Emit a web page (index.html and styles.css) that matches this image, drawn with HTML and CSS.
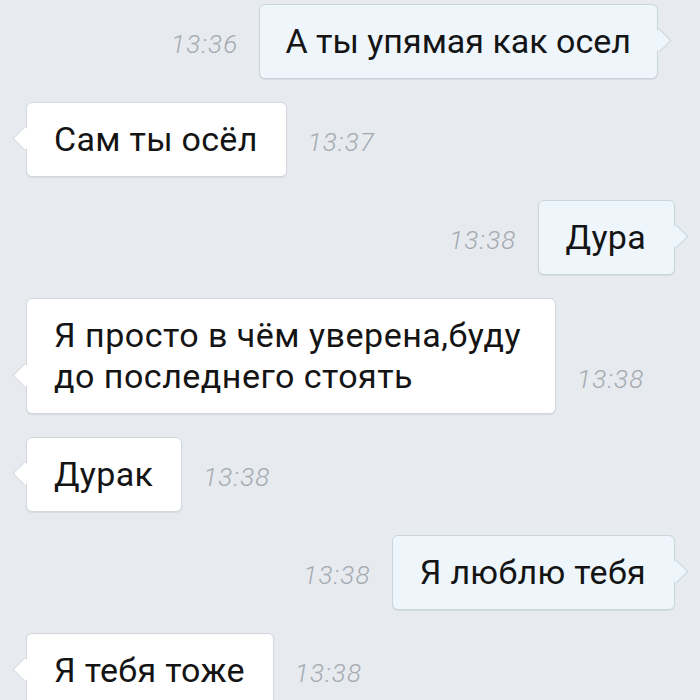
FILE: index.html
```html
<!DOCTYPE html>
<html lang="ru">
<head>
<meta charset="utf-8">
<link rel="stylesheet" href="styles.css">
</head>
<body>
<div class="chat">
  <div class="row out out-first">
    <span class="time">13:36</span>
    <div class="bubble tight">А ты упямая как осел</div>
  </div>
  <div class="row in">
    <div class="bubble">Сам ты осёл</div>
    <span class="time">13:37</span>
  </div>
  <div class="row out">
    <span class="time">13:38</span>
    <div class="bubble">Дура</div>
  </div>
  <div class="row in">
    <div class="bubble wide">Я просто в чём уверена,буду<br>до последнего стоять</div>
    <span class="time">13:38</span>
  </div>
  <div class="row in">
    <div class="bubble">Дурак</div>
    <span class="time">13:38</span>
  </div>
  <div class="row out">
    <span class="time">13:38</span>
    <div class="bubble">Я люблю тебя</div>
  </div>
  <div class="row in">
    <div class="bubble">Я тебя тоже</div>
    <span class="time">13:38</span>
  </div>
</div>
</body>
</html>
```

FILE: styles.css
```css
html, body {
  margin: 0;
  padding: 0;
  background: #e7eaee;
  width: 700px;
  height: 700px;
  overflow: hidden;
}

.chat {
  display: flex;
  flex-direction: column;
  gap: 23px;
  padding-top: 4px;
  font-family: Roboto, "Noto Sans", sans-serif;
}

.row {
  display: flex;
  align-items: flex-end;
  gap: 21px;
}

.row.out {
  justify-content: flex-end;
  padding-right: 25px;
}

.row.out.out-first {
  padding-right: 42px;
}

.row.in {
  padding-left: 26px;
}

.bubble {
  position: relative;
  font-size: 34px;
  letter-spacing: 0.3px;
  line-height: 41px;
  color: #141414;
  padding: 16px 28px 16px 27px;
  border-radius: 6px;
  background: #ffffff;
  border: 1px solid #d3d7dc;
  box-shadow: 0 1px 1px rgba(0, 0, 0, 0.07);
}

.bubble.tight {
  letter-spacing: 0;
  padding-left: 25px;
  padding-right: 26px;
}

.bubble.wide {
  letter-spacing: 0.5px;
  padding-right: 34px;
}

.bubble::after {
  content: "";
  position: absolute;
  bottom: 29px;
  width: 16px;
  height: 16px;
  background: inherit;
  transform: rotate(45deg);
}

.row.in .bubble::after {
  left: -11px;
  border-left: 1px solid #d3d7dc;
  border-bottom: 1px solid #d3d7dc;
}

.row.out .bubble {
  background: #eef6fc;
  border-color: #c9d4dd;
}

.row.out .bubble::after {
  right: -11px;
  border-right: 1px solid #c9d4dd;
  border-top: 1px solid #c9d4dd;
}

.time {
  font-size: 26px;
  letter-spacing: 1.2px;
  font-style: italic;
  font-weight: 300;
  color: #a5aab1;
  padding-bottom: 21px;
  line-height: 28px;
}
```
